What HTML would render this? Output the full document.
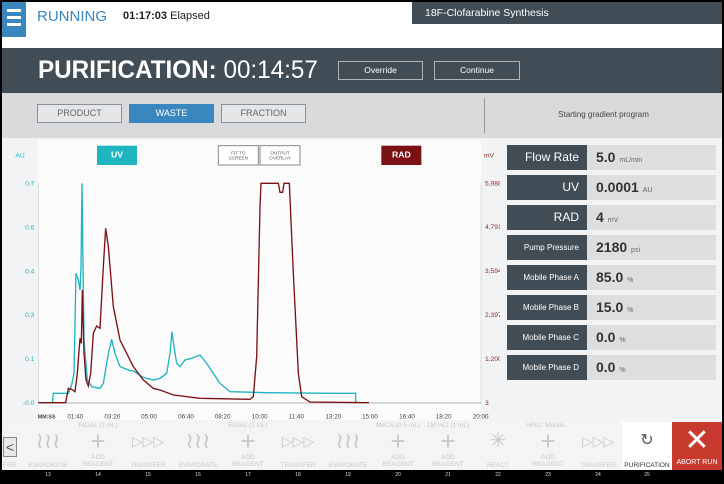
<!DOCTYPE html>
<html><head><meta charset="utf-8"><style>
*{margin:0;padding:0;box-sizing:border-box}
body{width:724px;height:484px;background:#000;font-family:"Liberation Sans",sans-serif;position:relative;overflow:hidden}
.a{position:absolute}
.btn{position:absolute;border:1px solid #8b9197;background:#e4e6e8;color:#666;font-size:9px;text-align:center;line-height:17px}
.lab{position:absolute;left:507px;width:80px;height:25px;background:#424c55;color:#fff;text-align:right;padding-right:8px;line-height:25px}
.val{position:absolute;left:587px;width:129px;height:25px;background:#dcdee0;color:#333;font-weight:bold;font-size:14px;line-height:25px;padding-left:9px}
.val small{font-weight:normal;font-size:7px;color:#666}
.cell{position:absolute;top:422px;width:50px;height:48px;text-align:center;color:#c8c8c8;font-size:6.5px;line-height:7px}
.num{position:absolute;top:472px;width:50px;text-align:center;color:#ddd;font-size:5px}
</style></head><body>
<div class="a" style="left:2px;top:2px;width:720px;height:46px;background:#fff"></div>
<div class="a" style="left:2px;top:2px;width:24px;height:35px;background:#3a87c0"></div>
<div class="a" style="left:7px;top:9px;width:14px;height:3px;background:#fff;box-shadow:0 7px 0 #fff,0 14px 0 #fff"></div>
<div class="a" style="left:37px;top:8px;font-size:15px;color:#3a87c0">RUNNING</div>
<div class="a" style="left:123px;top:10px;font-size:11px;color:#222"><b>01:17:03</b> Elapsed</div>
<div class="a" style="left:412px;top:2px;width:310px;height:22px;background:#424c55;color:#fff;font-size:10.5px;padding:5px 13px">18F-Clofarabine Synthesis</div>
<div class="a" style="left:2px;top:48px;width:720px;height:45px;background:#424c55"></div>
<div class="a" style="left:38px;top:56px;font-size:25px;color:#fff;white-space:nowrap;transform:scaleX(0.97);transform-origin:left"><b>PURIFICATION:</b> 00:14:57</div>
<div class="a" style="left:338px;top:61px;width:85px;height:19px;border:1px solid #aeb4b9;color:#fff;font-size:8.5px;text-align:center;line-height:17px">Override</div>
<div class="a" style="left:434px;top:61px;width:86px;height:19px;border:1px solid #aeb4b9;color:#fff;font-size:8.5px;text-align:center;line-height:17px">Continue</div>
<div class="a" style="left:2px;top:93px;width:720px;height:45px;background:#d8dadc"></div>
<div class="btn" style="left:37px;top:104px;width:85px;height:19px">PRODUCT</div>
<div class="btn" style="left:129px;top:104px;width:85px;height:19px;background:#3a87c0;color:#fff;border-color:#3a87c0">WASTE</div>
<div class="btn" style="left:221px;top:104px;width:85px;height:19px">FRACTION</div>
<div class="a" style="left:484px;top:98px;width:1px;height:35px;background:#999"></div>
<div class="a" style="left:485px;top:110px;width:237px;text-align:center;font-size:8px;color:#444">Starting gradient program</div>
<div class="a" style="left:2px;top:138px;width:720px;height:284px;background:#f2f3f4"></div>
<div class="a" style="left:38px;top:140px;width:443px;height:280px;background:#fbfbfb"></div>
<svg class="a" style="left:0;top:140px" width="500" height="280" viewBox="0 0 1500 840" font-family="Liberation Sans, sans-serif">
<line x1="115" y1="130" x2="115" y2="790" stroke="#ccc" stroke-width="2"/>
<line x1="1443" y1="130" x2="1443" y2="790" stroke="#ccc" stroke-width="2"/>
<line x1="115" y1="789" x2="1443" y2="789" stroke="#999" stroke-width="2"/>
<g fill="#1fb5c0" font-size="20" text-anchor="end">
<text x="74" y="52">AU</text>
<text x="103" y="136">0.7</text><text x="103" y="269">0.6</text><text x="103" y="400">0.4</text><text x="103" y="531">0.3</text><text x="103" y="663">0.1</text><text x="103" y="795">-0.0</text></g>
<g fill="#8a2a2e" font-size="20">
<text x="1452" y="52">mV</text>
<text x="1455" y="136">5,988</text><text x="1455" y="267">4,791</text><text x="1455" y="399">3,594</text><text x="1455" y="531">2,397</text><text x="1455" y="663">1,200</text><text x="1455" y="795">3</text></g>
<g fill="#444" font-size="19" text-anchor="middle">
<text x="140" y="836" font-weight="bold" font-size="16">MM:SS</text>
<text x="226" y="836">01:40</text><text x="337" y="836">03:20</text><text x="447" y="836">05:00</text><text x="558" y="836">06:40</text><text x="668" y="836">08:20</text><text x="779" y="836">10:00</text><text x="889" y="836">11:40</text><text x="1000" y="836">13:20</text><text x="1110" y="836">15:00</text><text x="1221" y="836">16:40</text><text x="1331" y="836">18:20</text><text x="1442" y="836">20:00</text></g>
<rect x="291" y="17" width="120" height="58" fill="#1fb5c0"/>
<text x="351" y="53" fill="#fff" font-size="26" font-weight="bold" text-anchor="middle">UV</text>
<rect x="655" y="17" width="120" height="58" fill="#fff" stroke="#888" stroke-width="3"/>
<rect x="780" y="17" width="120" height="58" fill="#fff" stroke="#888" stroke-width="3"/>
<g font-size="14" fill="#555" text-anchor="middle"><text x="715" y="43">FIT TO</text><text x="715" y="59">SCREEN</text><text x="840" y="43">OUTPUT</text><text x="840" y="59">OVERLAY</text></g>
<rect x="1144" y="17" width="120" height="58" fill="#7b1115"/>
<text x="1204" y="53" fill="#fff" font-size="26" font-weight="bold" text-anchor="middle">RAD</text>
<path fill="none" stroke="#1fb5c0" stroke-width="4" d="M115,788 L157,788 L160,760 L205,760 L215,735 L222,700 L228,400 L235,420 L240,450 L243,380 L246,130 L248,300 L252,600 L262,720 L275,740 L300,745 L310,730 L325,640 L335,598 L345,640 L360,680 L390,692 L400,693 L430,712 L460,720 L480,715 L500,700 L510,640 L516,575 L522,620 L530,670 L540,680 L555,660 L575,655 L600,645 L620,670 L660,730 L690,755 L800,758 L1000,760 L1067,760 L1067,788"/>
<path fill="none" stroke="#7b1115" stroke-width="4" d="M115,788 L197,788 L205,745 L215,748 L225,755 L232,700 L240,595 L244,610 L247,450 L252,640 L258,720 L265,738 L272,700 L280,580 L290,558 L300,565 L310,380 L317,265 L325,320 L340,500 L360,600 L400,680 L430,720 L460,745 L480,750 L520,765 L600,775 L750,778 L760,770 L770,650 L780,200 L783,130 L835,130 L840,157 L848,157 L852,130 L868,130 L880,400 L895,700 L905,770 L930,786 L1107,788"/>
</svg>
<div class="lab" style="top:145px;font-size:12px">Flow Rate</div><div class="val" style="top:145px">5.0 <small>mL/min</small></div>
<div class="lab" style="top:175px;font-size:12px">UV</div><div class="val" style="top:175px">0.0001 <small>AU</small></div>
<div class="lab" style="top:205px;font-size:12px">RAD</div><div class="val" style="top:205px">4 <small>mV</small></div>
<div class="lab" style="top:235px;font-size:8px">Pump Pressure</div><div class="val" style="top:235px">2180 <small>psi</small></div>
<div class="lab" style="top:265px;font-size:8px">Mobile Phase A</div><div class="val" style="top:265px">85.0 <small>%</small></div>
<div class="lab" style="top:295px;font-size:8px">Mobile Phase B</div><div class="val" style="top:295px">15.0 <small>%</small></div>
<div class="lab" style="top:325px;font-size:8px">Mobile Phase C</div><div class="val" style="top:325px">0.0 <small>%</small></div>
<div class="lab" style="top:355px;font-size:8px">Mobile Phase D</div><div class="val" style="top:355px">0.0 <small>%</small></div>
<div class="a" style="left:2px;top:422px;width:720px;height:48px;background:#f4f4f4"></div>
<div class="a" style="left:3px;top:437px;width:14px;height:20px;border:1px solid #888;background:#e8e8e8;color:#555;font-size:14px;text-align:center;line-height:18px">&lt;</div>
<div class="cell" style="left:-27px;"><div style="margin-top:40px;padding-left:30px;text-align:left">FER</div></div>
<div class="cell" style="left:23px"><div style="font-size:22px;line-height:30px;margin-top:4px">≀≀≀</div><div style="margin-top:6px">EVAPORATE</div></div>
<div class="cell" style="left:73px"><div>EtOAc (2 mL)</div><div style="font-size:26px;line-height:25px">+</div><div>ADD<br>REAGENT</div></div>
<div class="cell" style="left:123px"><div style="font-size:14px;line-height:30px;margin-top:4px">▷▷▷</div><div style="margin-top:6px">TRANSFER</div></div>
<div class="cell" style="left:173px"><div style="font-size:22px;line-height:30px;margin-top:4px">≀≀≀</div><div style="margin-top:6px">EVAPORATE</div></div>
<div class="cell" style="left:223px"><div>EtOAc (2 mL)</div><div style="font-size:26px;line-height:25px">+</div><div>ADD<br>REAGENT</div></div>
<div class="cell" style="left:273px"><div style="font-size:14px;line-height:30px;margin-top:4px">▷▷▷</div><div style="margin-top:6px">TRANSFER</div></div>
<div class="cell" style="left:323px"><div style="font-size:22px;line-height:30px;margin-top:4px">≀≀≀</div><div style="margin-top:6px">EVAPORATE</div></div>
<div class="cell" style="left:373px"><div>MeCN (0.5 mL)</div><div style="font-size:26px;line-height:25px">+</div><div>ADD<br>REAGENT</div></div>
<div class="cell" style="left:423px"><div>1M HCl (1 mL)</div><div style="font-size:26px;line-height:25px">+</div><div>ADD<br>REAGENT</div></div>
<div class="cell" style="left:473px"><div style="font-size:20px;line-height:30px;margin-top:4px">✳</div><div style="margin-top:6px">REACT</div></div>
<div class="cell" style="left:523px"><div>HPLC Mobile...</div><div style="font-size:26px;line-height:25px">+</div><div>ADD<br>REAGENT</div></div>
<div class="cell" style="left:573px"><div style="font-size:14px;line-height:30px;margin-top:4px">▷▷▷</div><div style="margin-top:6px">TRANSFER</div></div>
<div class="cell" style="left:622px;background:#fff;color:#333"><div style="font-size:16px;line-height:30px;margin-top:4px;color:#555">↻</div><div style="margin-top:6px;font-size:6.5px">PURIFICATION</div></div>
<div class="cell" style="left:672px;background:#c93a2e;color:#fff"><div style="font-size:30px;line-height:32px;margin-top:3px">✕</div><div style="margin-top:2px;font-size:7px">ABORT RUN</div></div>
<div class="num" style="left:23px">13</div><div class="num" style="left:73px">14</div><div class="num" style="left:123px">15</div><div class="num" style="left:173px">16</div><div class="num" style="left:223px">17</div><div class="num" style="left:273px">18</div><div class="num" style="left:323px">19</div><div class="num" style="left:373px">20</div><div class="num" style="left:423px">21</div><div class="num" style="left:473px">22</div><div class="num" style="left:523px">23</div><div class="num" style="left:573px">24</div><div class="num" style="left:622px">25</div>
</body></html>
